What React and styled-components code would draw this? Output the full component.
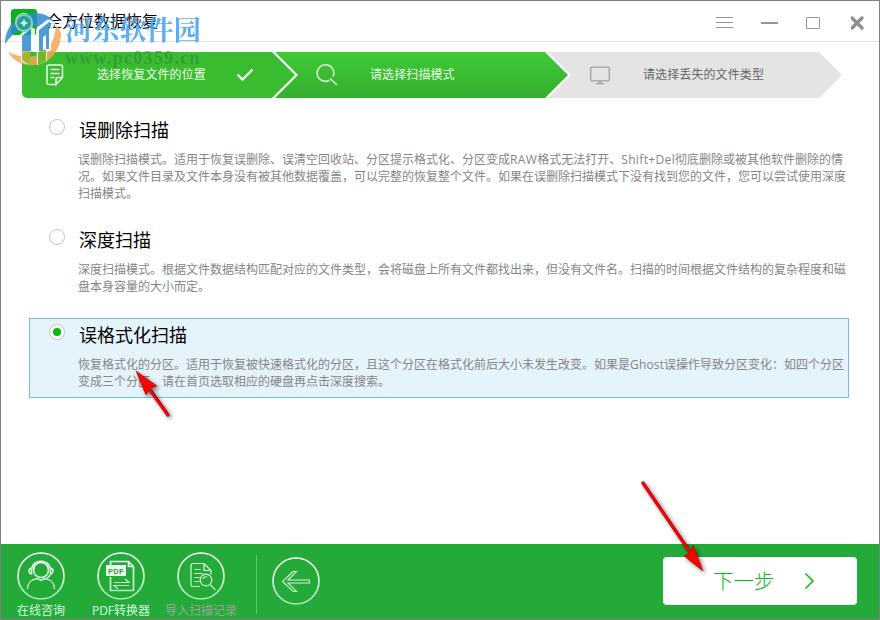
import React from "react";
import styled, { createGlobalStyle } from "styled-components";

const Global = createGlobalStyle`
  *, *::before, *::after { box-sizing: border-box; }
  body { margin: 0; background: #fff; font-family: "Open Sans", "Noto Sans CJK SC", sans-serif; font-size: 12px; }
  button { font: inherit; border: 0; padding: 0; background: none; }
  svg { display: block; }
`;

const Window = styled.div`
  position: relative;
  display: flex;
  flex-direction: column;
  width: 880px;
  height: 620px;
  overflow: hidden;
  border: 1px solid #7f7f7f;
  background: #fff;
`;

const TitleBar = styled.header`
  display: flex;
  align-items: flex-start;
  height: 41px;
  flex: none;
  padding: 8px 10px 0 10px;
  border-bottom: 1px solid #e3e3e3;
`;

const AppTitle = styled.h1`
  margin: 0 0 0 9px;
  font-size: 16px;
  line-height: 24px;
  font-weight: 400;
  color: #000;
`;

const WindowControls = styled.div`
  display: flex;
  gap: 27px;
  margin: 5px 0 0 auto;
`;

const ControlButton = styled.button`
  width: 18px;
  height: 18px;
`;

const Steps = styled.ol`
  display: flex;
  flex: none;
  height: 46px;
  margin: 10px 0 0 21px;
  padding: 0;
  list-style: none;
`;

const Step = styled.li`
  display: flex;
  align-items: center;
  width: ${(p) => p.$width}px;
  margin-right: -20px;
  padding-left: ${(p) => p.$indent}px;
  color: ${(p) => (p.$pending ? "#666" : "#e9ffe6")};
  background: ${(p) => p.$fill};
  border-radius: ${(p) => (p.$first ? "5px" : "0")};
  clip-path: ${(p) =>
    p.$first
      ? "polygon(0 0, calc(100% - 23px) 0, 100% 50%, calc(100% - 23px) 100%, 0 100%)"
      : "polygon(0 0, calc(100% - 23px) 0, 100% 50%, calc(100% - 23px) 100%, 0 100%, 23px 50%)"};
`;

const StepLabel = styled.span`
  width: ${(p) => p.$width}px;
  margin-left: ${(p) => p.$gap}px;
  line-height: 18px;
  letter-spacing: 0.1px;
  white-space: nowrap;
`;

const OptionList = styled.main`
  display: flex;
  flex-direction: column;
  flex: 1;
  padding: 15px 30px 0 28px;
`;

const Option = styled.label`
  display: flex;
  height: ${(p) => p.$height}px;
  padding: 5px 0 0 19px;
  border: 1px solid ${(p) => (p.$selected ? "#6dbde6" : "transparent")};
  background: ${(p) => (p.$selected ? "#e5f3fb" : "transparent")};
`;

const Radio = styled.span`
  display: grid;
  place-items: center;
  flex: none;
  width: 16px;
  height: 16px;
  border: 1px solid #c3c3c3;
  border-radius: 50%;
  background: #fff;

  &::after {
    content: "";
    width: 8px;
    height: 8px;
    border-radius: 50%;
    background: ${(p) => (p.$checked ? "#00bb12" : "transparent")};
  }
`;

const OptionBody = styled.div`
  margin-left: 13px;
`;

const OptionTitle = styled.h2`
  margin: -2px 0 8px 1px;
  font-size: 18px;
  line-height: 26px;
  font-weight: 400;
  color: #000;
`;

const OptionLine = styled.p`
  margin: 0;
  line-height: 17px;
  white-space: nowrap;
  color: #858585;
`;

const Latin = styled.span`
  letter-spacing: ${(p) => p.$track}px;
`;

const Footer = styled.footer`
  display: flex;
  flex: none;
  height: 75px;
  padding-right: 22px;
  background: #24aa38;
`;

const Tool = styled.button`
  display: flex;
  flex-direction: column;
  align-items: center;
  width: 80px;
  padding-top: 8px;
  color: ${(p) => (p.$disabled ? "#9fa39f" : "#d9fbe0")};
`;

const ToolLabel = styled.span`
  margin-top: 2px;
  line-height: 17px;
  white-space: nowrap;
`;

const Divider = styled.span`
  width: 1px;
  height: 59px;
  margin: 11px 15px 0 15px;
  background: #54cf60;
`;

const BackButton = styled.button`
  align-self: flex-start;
  margin-top: 13px;
`;

const NextButton = styled.button`
  display: flex;
  align-items: center;
  width: 194px;
  height: 48px;
  margin: 13px 0 0 auto;
  padding: 0 0 2px 50px;
  gap: 29px;
  border-radius: 4px;
  background: #fff;
  color: #0cb912;
  font-size: 20.5px;
  font-weight: 300;

  svg {
    margin-top: 2px;
  }
`;

const Watermark = styled.div`
  position: absolute;
  left: 2px;
  top: 6px;
  display: flex;
  pointer-events: none;
`;

const WatermarkText = styled.div`
  margin: 5px 0 0 2px;
  display: flex;
  flex-direction: column;
`;

const WatermarkName = styled.span`
  font: 700 27.2px/34px "Noto Serif CJK SC", "Noto Sans CJK SC", serif;
  color: #4ca5f0;
  opacity: 0.9;
  white-space: nowrap;
`;

const WatermarkUrl = styled.span`
  margin-top: 3px;
  font: 700 18px/18px "Liberation Serif", serif;
  letter-spacing: 1.3px;
  color: #2c8c35;
  opacity: 0.62;
  white-space: nowrap;
`;

const Pointer = styled.svg`
  position: absolute;
  left: ${(p) => p.$x}px;
  top: ${(p) => p.$y}px;
  overflow: visible;
  pointer-events: none;
  filter: drop-shadow(2px 2px 2px rgba(0, 0, 0, 0.55));
`;

const AppLogo = () => (
  <svg width="26" height="26" viewBox="0 0 26 26">
    <rect width="26" height="26" rx="3" fill="#09b11b" />
    <circle cx="13" cy="13" r="8.500" fill="none" stroke="#a5e2ad" strokeWidth="1.500" />
  </svg>
);

const WatermarkLogo = () => (
  <svg width="60" height="60" viewBox="0 0 60 60" opacity="0.85">
    <path d="M2 37C2 18 16 6 32 6c8 0 15 3 20 9l-8-1L33 21l-5-5-10 6C11 26 6 31 2 37z" fill="#2f8bd0" />
    <path d="M5 45c5 9 15 14 27 13C46 57 58 44 58 26c-1-3-3-6-5-8-1 13-5 27-21 31-9 2-18 0-27-4z" fill="#f5a653" />
    <path d="M13 31 27 19l5 3v23h-5v12q-6 0-9-3V31z" fill="#fff" />
    <path d="M19 29 28 22v22h-9z" fill="#2f8bd0" />
    <path d="M19 44h8v13q-5-1-8-4z" fill="#b7b62c" />
    <path d="m33 22 12-10 8 3-5 10v18l-4 2v9l-10 4z" fill="#fff" />
    <path d="m36 23 10-8q4 1 0 8v19h-3V28l-3 2v14h-4z" fill="#2f8bd0" />
    <path d="m35 45 8-3v12l-8 4z" fill="#80b62c" />
    <circle cx="21" cy="16" r="8" fill="#2f9ea6" stroke="#8fc9da" strokeWidth="2.200" />
    <path d="m21 12 1.400 2.600 2.600 1.400-2.600 1.400L21 20l-1.400-2.600L17 16l2.600-1.400z" fill="#e8fff2" />
  </svg>
);

const NoteIcon = () => (
  <svg width="18" height="22" viewBox="0 0 18 22" fill="none" stroke="#e2f9df" strokeWidth="1.600">
    <path d="M10 20.500H3Q1 20.500 1 18.500V3Q1 1 3 1h11.500q2 0 2 2v10.500L10 20.500v-5q0-2 2-2h4.500" />
    <path d="M4.500 5.500h9M4.500 9.500h9M4.500 13.500h4" />
  </svg>
);

const CheckIcon = () => (
  <svg width="18" height="14" viewBox="0 0 18 14" fill="none" stroke="#f0fff0" strokeWidth="2.400">
    <path d="m1.500 6.500 5 5L16.500 1.500" />
  </svg>
);

const SearchIcon = () => (
  <svg width="22" height="22" viewBox="0 0 22 22" fill="none" stroke="#d8f7d4" strokeWidth="1.600">
    <path d="M13.500 16.300A8.300 8.300 0 1 1 17 12.500M14 14.500l7 6.500" />
  </svg>
);

const MonitorIcon = () => (
  <svg width="20" height="19" viewBox="0 0 20 19" fill="none" stroke="#a0a0a0">
    <rect x=".7" y="1.200" width="18.600" height="13.600" rx="1" strokeWidth="1.300" />
    <path d="M8.500 16.200h3M6 17.700h8" strokeWidth="1.200" />
  </svg>
);

const RoundIcon = ({ id, children }) => (
  <svg width="48" height="48" viewBox="0 0 48 48" fill="none" stroke={`url(#${id})`} strokeWidth="1.700">
    <defs>
      <linearGradient id={id} gradientUnits="userSpaceOnUse" x1="0" y1="0" x2="0" y2="48">
        <stop offset="0" stopColor="#fff" />
        <stop offset="1" stopColor="#a9e6b0" />
      </linearGradient>
    </defs>
    <circle cx="24" cy="24" r="23" />
    {children}
  </svg>
);

const options = [
  {
    title: "误删除扫描",
    height: 110,
    track: 0.36,
    lines: [
      "误删除扫描模式。适用于恢复误删除、误清空回收站、分区提示格式化、分区变成RAW格式无法打开、Shift+Del彻底删除或被其他软件删除的情",
      "况。如果文件目录及文件本身没有被其他数据覆盖，可以完整的恢复整个文件。如果在误删除扫描模式下没有找到您的文件，您可以尝试使用深度",
      "扫描模式。",
    ],
  },
  {
    title: "深度扫描",
    height: 95,
    lines: [
      "深度扫描模式。根据文件数据结构匹配对应的文件类型，会将磁盘上所有文件都找出来，但没有文件名。扫描的时间根据文件结构的复杂程度和磁",
      "盘本身容量的大小而定。",
    ],
  },
  {
    title: "误格式化扫描",
    height: 80,
    selected: true,
    track: 0.15,
    lines: [
      "恢复格式化的分区。适用于恢复被快速格式化的分区，且这个分区在格式化前后大小未发生改变。如果是Ghost误操作导致分区变化：如四个分区",
      "变成三个分区，请在首页选取相应的硬盘再点击深度搜索。",
    ],
  },
];

const splitLatin = (line, track) =>
  line.split(/([A-Za-z+]+)/).map((part, i) =>
    i % 2 ? (
      <Latin key={i} $track={track}>
        {part}
      </Latin>
    ) : (
      part
    )
  );

export default function App() {
  return (
    <>
      <Global />
      <Window>
        <TitleBar>
          <AppLogo />
          <AppTitle>全方位数据恢复</AppTitle>
          <WindowControls>
            <ControlButton aria-label="菜单">
              <svg width="18" height="18" stroke="#949494">
                <path d="M0 3.500h17M0 8.500h17M0 13.500h17" />
              </svg>
            </ControlButton>
            <ControlButton aria-label="最小化">
              <svg width="18" height="18" stroke="#949494" strokeWidth="2">
                <path d="M0 9h17" />
              </svg>
            </ControlButton>
            <ControlButton aria-label="最大化">
              <svg width="18" height="18" stroke="#949494" fill="none">
                <rect x="0.500" y="3.500" width="13" height="11" rx=".5" />
              </svg>
            </ControlButton>
            <ControlButton aria-label="关闭">
              <svg width="18" height="18" stroke="#8f8f8f" strokeWidth="3.400" strokeLinecap="round">
                <path d="m1 4 10 10m0-10-10 10" />
              </svg>
            </ControlButton>
          </WindowControls>
        </TitleBar>

        <Steps>
          <Step $first $width={273} $indent={24} $fill="#3abc31">
            <NoteIcon />
            <StepLabel $gap={33} $width={139}>选择恢复文件的位置</StepLabel>
            <CheckIcon />
          </Step>
          <Step $width={293} $indent={41} $fill="linear-gradient(#3fca36, #35ae2f)">
            <SearchIcon />
            <StepLabel $gap={32}>请选择扫描模式</StepLabel>
          </Step>
          <Step $pending $width={294} $indent={42} $fill="#e4e4e4">
            <MonitorIcon />
            <StepLabel $gap={33}>请选择丢失的文件类型</StepLabel>
          </Step>
        </Steps>

        <OptionList>
          {options.map((o) => (
            <Option key={o.title} $height={o.height} $selected={o.selected}>
              <Radio $checked={o.selected} />
              <OptionBody>
                <OptionTitle>{o.title}</OptionTitle>
                {o.lines.map((line) => (
                  <OptionLine key={line}>{splitLatin(line, o.track)}</OptionLine>
                ))}
              </OptionBody>
            </Option>
          ))}
        </OptionList>

        <Footer>
          <Tool>
            <RoundIcon id="consult">
              <circle cx="24" cy="18" r="7.500" />
              <path d="M14.500 17C15.500 6.500 32.500 6.500 33.500 17M14.500 16q-2.500.5-2.500 3t2.500 3zM33.500 16q2.500.5 2.500 3t-2.500 3zM33.500 22q-2 5-8 5M10.500 37C11 27 18 27 20.500 26.500l3.500 2 3.500-2C30 27 37 27 37.500 37" strokeWidth="1.500" />
            </RoundIcon>
            <ToolLabel>在线咨询</ToolLabel>
          </Tool>
          <Tool>
            <RoundIcon id="convert">
              <path d="M13.500 13v-3.500h18l5 5V38.500h-23V25M31.500 9.500v5h5" />
              <rect x="9" y="13" width="20" height="11" fill="#effff0" stroke="none" />
              <text x="11" y="21.500" fill="#20a334" stroke="none" fontFamily="Liberation Sans" fontSize="7.500" fontWeight="700" textLength="15.500">PDF</text>
              <path d="M17 30.500h15l-4-3.500M32 33.500H17l4 3.500" strokeWidth="1.200" />
            </RoundIcon>
            <ToolLabel>PDF转换器</ToolLabel>
          </Tool>
          <Tool $disabled>
            <RoundIcon id="records">
              <path d="M23 34.500h-7q-2 0-2-2v-19q0-2 2-2h11l7 7v4M27 11.500v7h7M17.500 17.500h6M17.500 21.500h8M17.500 25.500h5M17.500 29.500h5" strokeWidth="1.200" />
              <circle cx="29" cy="28" r="5.800" strokeWidth="1.300" />
              <path d="m33 32.500 5.500 5.500M26 27q1-3 4-2" strokeWidth="1.200" />
            </RoundIcon>
            <ToolLabel>导入扫描记录</ToolLabel>
          </Tool>
          <Divider />
          <BackButton aria-label="返回">
            <RoundIcon id="back">
              <path d="M10.500 24.500 21 14.500h3.500L16 23h21.500v3H16l8.500 8.500H21z" strokeWidth="1.100" />
            </RoundIcon>
          </BackButton>
          <NextButton>
            下一步
            <svg width="11" height="18" viewBox="0 0 11 18" fill="none" stroke="#0cb912" strokeWidth="1.500">
              <path d="m1.500 1.500 7.500 7.500-7.500 7.500" />
            </svg>
          </NextButton>
        </Footer>

        <Watermark>
          <WatermarkLogo />
          <WatermarkText>
            <WatermarkName>河东软件园</WatermarkName>
            <WatermarkUrl>www.pc0359.cn</WatermarkUrl>
          </WatermarkText>
        </Watermark>

        <Pointer $x={135} $y={370} width="34" height="46">
          <path d="m15 20 17 24" stroke="#8a0000" strokeWidth="3.200" strokeLinecap="round" />
          <path d="m0 0 21 15-6.500 2-4.500 7z" fill="#f00" stroke="#8a0000" strokeWidth=".5" />
          <path d="m12 17 20 27" stroke="#f00" strokeWidth="2.400" strokeLinecap="round" />
        </Pointer>
        <Pointer $x={641} $y={481} width="61" height="89">
          <path d="m1 1 47 69" stroke="#8a0000" strokeWidth="3.200" strokeLinecap="round" />
          <path d="m61 89-19-15 6.500-3 2.500-8z" fill="#f00" stroke="#8a0000" strokeWidth=".5" />
          <path d="m1 1 49 72" stroke="#f00" strokeWidth="2.400" strokeLinecap="round" />
        </Pointer>
      </Window>
    </>
  );
}
